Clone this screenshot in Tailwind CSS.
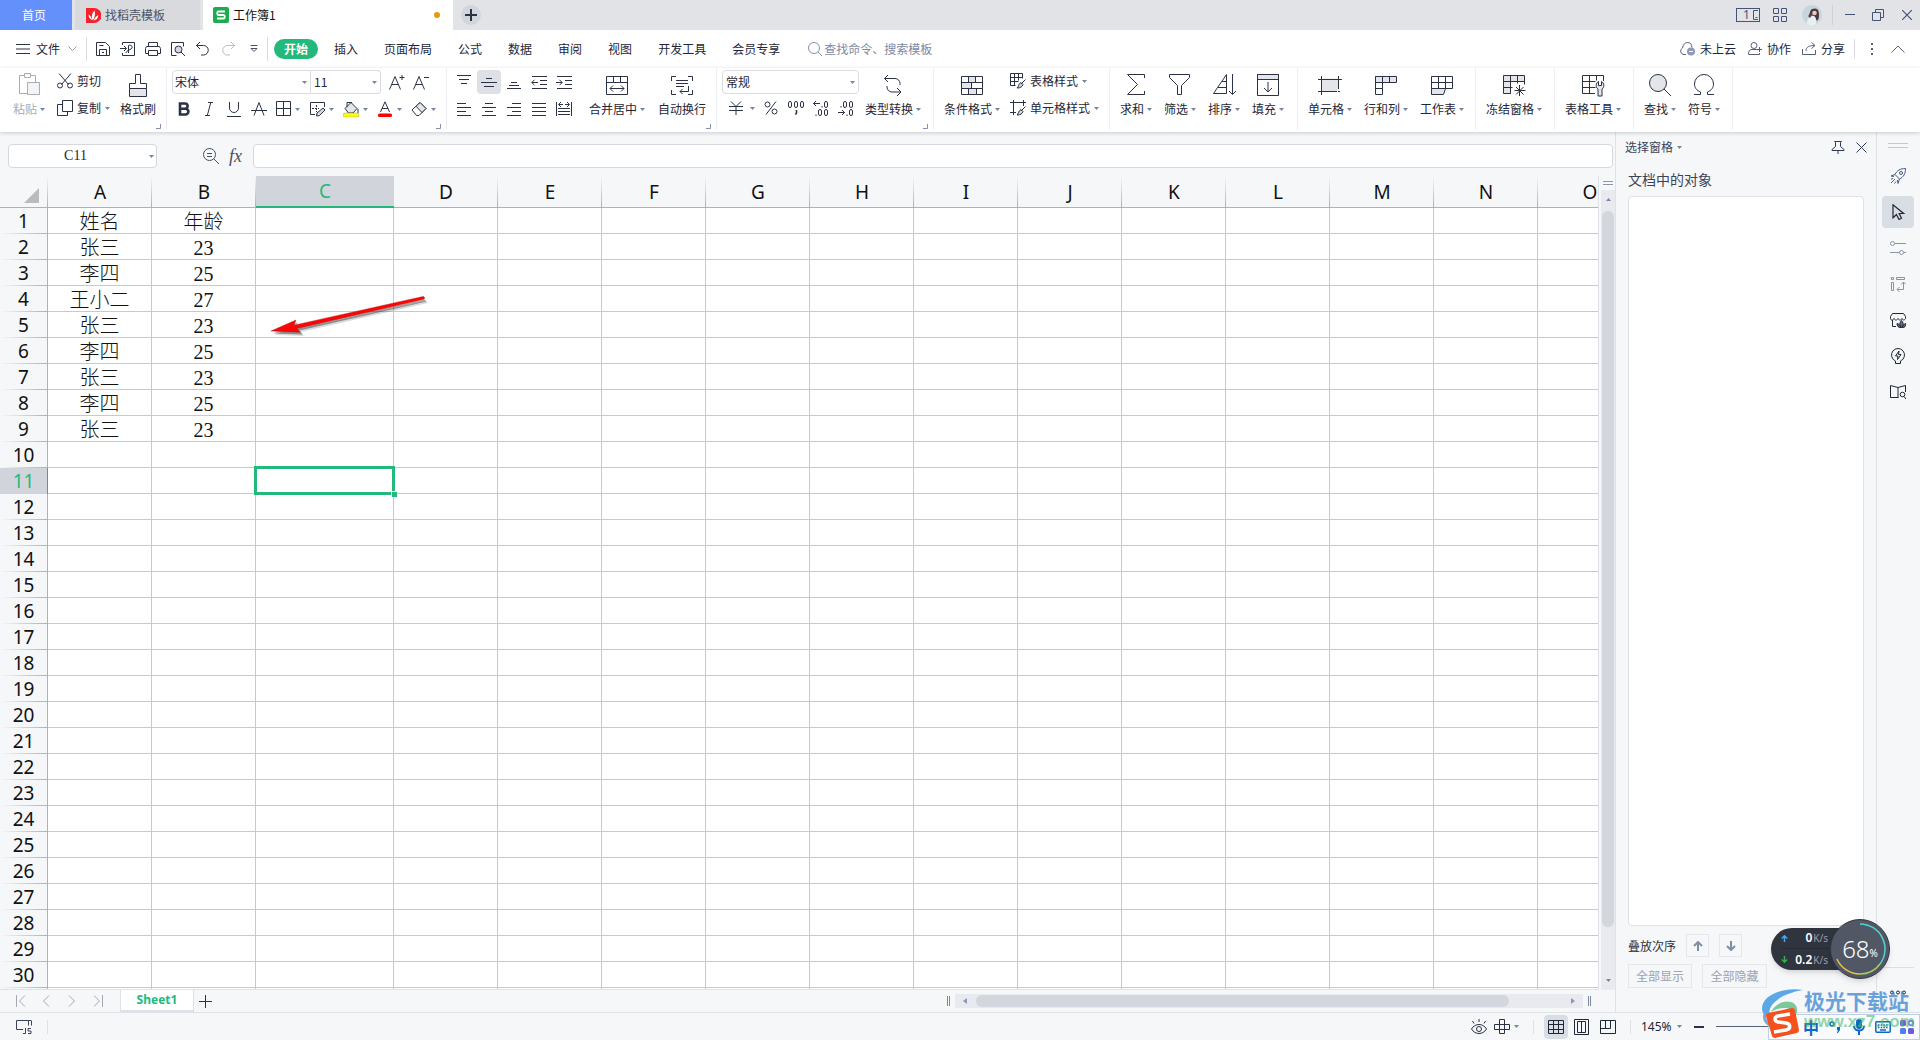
<!DOCTYPE html>
<html lang="zh-CN">
<head>
<meta charset="utf-8">
<title>工作簿1</title>
<script src="https://cdn.jsdelivr.net/npm/@tailwindcss/browser@4"></script>
</head>
<body class="relative flex h-screen flex-col overflow-hidden bg-[#f5f7f9] font-['Noto_Sans_CJK_SC',sans-serif] text-xs leading-4 text-[#1f2636]">

<svg class="hidden" aria-hidden="true">
  <symbol id="caret" viewBox="0 0 5 3"><path d="M0 0h5L2.500 3z" fill="#7585a2"/></symbol>
  <symbol id="corner" viewBox="0 0 5 5"><path d="M4.500 0v4.500H0" fill="none" stroke="#8590ab"/></symbol>
</svg>

<!-- Title bar -->
<header class="flex h-[30px] shrink-0 items-center bg-[#e2e3e7]">
  <nav class="flex h-full items-center gap-[3px]">
    <a href="#" class="flex h-full w-[72px] items-center justify-center bg-[#6490fb] pr-1 text-white">首页</a>
    <a href="#" class="flex h-full w-[125px] items-center gap-1 bg-[#d8dade] pl-[11px] text-[#4c5365]">
      <svg class="size-[15px]" viewBox="0 0 15 15"><path d="M0 0h8a7.500 7.500 0 0 1 0 15H0z" fill="#f5222d"/><path d="M6.800 12.500C5 9 6 5.500 8.500 2.500c1 3 .5 7-1.700 10zM6 12C3.500 11 2.600 9 2.500 6.500 4.500 7.500 5.600 9.500 6 12zM7.800 12.500c.4-2 1.700-4 4.500-5.500 0 3-1.600 5-4.500 5.500z" fill="#fff"/></svg>找稻壳模板</a>
    <a href="#" class="flex h-full w-[250px] items-center gap-1 bg-white pr-[13px] pl-[10px] text-[#111]">
      <svg class="size-4" viewBox="0 0 16 16"><rect width="16" height="16" rx="2" fill="#1aad4f"/><path d="M12 4.500H5.500A1.200 1.200 0 0 0 4.300 5.700v1A1.200 1.200 0 0 0 5.500 8h5a1.200 1.200 0 0 1 1.200 1.200v1a1.200 1.200 0 0 1-1.200 1.300H4" fill="none" stroke="#fff" stroke-width="1.800"/></svg>
      <span class="flex-1">工作簿1</span><i class="size-[6px] rounded-full bg-[#e69b0a]"></i></a>
  </nav>
  <button aria-label="新建" class="ml-2 flex size-5 items-center justify-center rounded-full bg-[#d2d5dc]"><svg class="size-3" viewBox="0 0 12 12"><path d="M6 0v12M0 6h12" stroke="#2b3245" stroke-width="2"/></svg></button>
  <div class="ml-auto flex items-center pr-2">
    <button aria-label="窗口" class="flex h-[14px] w-6 border border-[#445377]"><span class="flex-1 pl-1 text-xs leading-3 font-['Noto_Sans'] text-[#445377]">1</span><svg class="h-3 w-[7px]" viewBox="0 0 7 12"><path d="M6 1.500H1.500v9H6M3.500 8.500h2" fill="none" stroke="#445377"/></svg></button>
    <button aria-label="应用" class="ml-[13px]"><svg class="size-[14px]" viewBox="0 0 14 14" fill="none" stroke="#445377"><path d="M.5.5h5v5h-5zM8.500.5h5v5h-5zM.5 8.500h5v5h-5zM8.500 8.500h5v5h-5z"/></svg></button>
    <button aria-label="账号" class="ml-[15px]"><svg class="size-5" viewBox="0 0 20 20"><circle cx="10" cy="10" r="10" fill="#c9d5dc"/><path d="M10 4c4-1.500 7 0 7 5 0 3 0 5-2 7l-3-5-5-1c1-2 1-5 3-6z" fill="#4b3a3d"/><circle cx="12.500" cy="8" r="2.300" fill="#e8c9bd"/><path d="M5 19c0-5 3-8 6-8 2 0 3 2 3 4v4a10 10 0 0 1-9 0z" fill="#e6f1f4"/><path d="M6 11l3-3 1 2-2 3z" fill="#56464a"/></svg></button>
    <i class="ml-[10px] h-5 w-px bg-[#cfd1d7]"></i>
    <button aria-label="最小化" class="ml-3"><svg class="h-3 w-[10px]" viewBox="0 0 10 12"><path d="M0 5.500h10" stroke="#445377"/></svg></button>
    <button aria-label="还原" class="ml-[17px]"><svg class="size-3" viewBox="0 0 12 12" fill="none" stroke="#445377"><path d="M.5 3.500h8v8h-8zM3.500 3.500v-3h8v8h-3"/></svg></button>
    <button aria-label="关闭" class="ml-[18px]"><svg class="size-[10px]" viewBox="0 0 10 10"><path d="M0 0l10 10M10 0L0 10" stroke="#445377" stroke-width="1.200"/></svg></button>
  </div>
</header>

<!-- Menu bar -->
<div class="flex h-[38px] shrink-0 items-center bg-white">
  <button class="ml-4 flex items-center"><svg class="mr-[6px] h-3 w-[14px]" viewBox="0 0 14 12"><path d="M0 1.500h14M0 6h14M0 10.500h14" stroke="#2b3245"/></svg>文件<svg class="ml-2 h-[6px] w-[9px]" viewBox="0 0 9 6"><path d="M.5.5l4 4 4-4" fill="none" stroke="#9a9ca3"/></svg></button>
  <i class="ml-[9px] h-6 w-px bg-[#dadce1]"></i>
  <div class="ml-2 flex items-center gap-[9px]">
    <button aria-label="保存"><svg class="size-4" viewBox="0 0 16 16" fill="none" stroke="#2b3245"><path d="M1.500 1.500h9l4 4v9h-13zM4.500 14.500v-6h7v6M4.500 4.500h4M7 11.500h2"/></svg></button>
    <button aria-label="输出为PDF"><svg class="size-4" viewBox="0 0 16 16" fill="none" stroke="#2b3245"><path d="M2.500 4V1.500h12v13h-12V12M0 7.500h6M4 5l2.500 2.500L4 10M8.500 12V4.500c4-1.500 5 3 1.500 4-3 1-3.500 2.500-4 3.500"/></svg></button>
    <button aria-label="打印"><svg class="size-4" viewBox="0 0 16 16" fill="none" stroke="#2b3245"><path d="M3.500 5.500v-4h9v4M3.500 12.500h-3v-5l1-2h13l1 2v5h-3M3.500 9.500h9v5h-9z"/></svg></button>
    <button aria-label="打印预览"><svg class="size-4" viewBox="0 0 16 16" fill="none" stroke="#2b3245"><path d="M6.500 14.500h-5v-13h12v4"/><circle cx="8.500" cy="8.500" r="3.500" fill="#d5d8df"/><path d="M11 11l4 4"/></svg></button>
    <button aria-label="撤销"><svg class="size-4" viewBox="0 0 16 16" fill="none" stroke="#2b3245"><path d="M5 1L1.500 4.500 5 8M1.500 4.500h7a4.500 4.500 0 0 1 0 9.500H6"/></svg></button>
    <button aria-label="恢复"><svg class="size-4" viewBox="0 0 16 16" fill="none" stroke="#b9bcc3"><path d="M11 1l3.500 3.500L11 8M14.500 4.500h-7a4.500 4.500 0 0 0 0 9.500H10"/></svg></button>
    <button aria-label="更多" class="ml-[5px]"><svg class="h-2 w-2" viewBox="0 0 8 8" fill="none" stroke="#4b5263"><path d="M.5.500h7M1 3.500l3 3 3-3z"/></svg></button>
  </div>
  <i class="ml-[9px] h-6 w-px bg-[#dadce1]"></i>
  <nav class="ml-[6px] flex items-center gap-[6px]">
    <a href="#" class="rounded-full bg-[#23b97c] px-[10px] py-[2px] font-bold text-white">开始</a>
    <a href="#" class="px-[10px]">插入</a><a href="#" class="px-[10px]">页面布局</a><a href="#" class="px-[10px]">公式</a><a href="#" class="px-[10px]">数据</a><a href="#" class="px-[10px]">审阅</a><a href="#" class="px-[10px]">视图</a><a href="#" class="px-[10px]">开发工具</a><a href="#" class="px-[10px]">会员专享</a>
  </nav>
  <label class="ml-[18px] flex items-center gap-[2px]"><svg class="size-[14px]" viewBox="0 0 14 14" fill="none" stroke="#8590ab"><circle cx="6" cy="6" r="5.500"/><path d="M10 10l4 4"/></svg><input aria-label="搜索" class="w-32 outline-none placeholder:text-[#7d89a4]" placeholder="查找命令、搜索模板"></label>
  <div class="ml-auto flex items-center pr-[15px]">
    <button class="flex items-center gap-[5px]"><svg class="h-[14px] w-[15px]" viewBox="0 0 15 14" fill="none" stroke="#596178"><path d="M6 12.500H4C.5 12.500-.5 8 2.500 6 3 2.500 5 .5 7.500.5S12 2 12 5.500"/><circle cx="11" cy="9.500" r="4" fill="#8f99b3" stroke="none"/><path d="M9 9.500h4" stroke="#fff"/></svg>未上云</button>
    <button class="ml-3 flex items-center gap-[5px]"><svg class="h-[14px] w-[14px]" viewBox="0 0 14 14" fill="none" stroke="#596178"><circle cx="6" cy="3.500" r="3"/><path d="M9 7.500H4C1.500 7.500.5 9 .5 12.500h11V11M11.500 5v5M9 7.500h5"/></svg>协作</button>
    <button class="ml-[11px] flex items-center gap-[5px]"><svg class="h-[14px] w-[14px]" viewBox="0 0 14 14" fill="none" stroke="#596178"><path d="M.5 7v5.500h13V8M4 9c0-4 3-5.500 9-5.500M9.500.5l3.500 3-3.500 3"/></svg>分享</button>
    <i class="ml-[9px] h-5 w-px bg-[#dadce1]"></i>
    <button aria-label="更多选项" class="ml-4"><svg class="h-3 w-[2px]" viewBox="0 0 2 12" fill="#596178"><path d="M0 0h2v2H0zM0 5h2v2H0zM0 10h2v2H0z"/></svg></button>
    <button aria-label="折叠功能区" class="ml-[18px]"><svg class="h-2 w-[14px]" viewBox="0 0 14 8"><path d="M.5 7.500L7 1l6.500 6.500" fill="none" stroke="#596178"/></svg></button>
  </div>
</div>

<!-- Ribbon -->
<div class="z-10 flex h-16 shrink-0 bg-white pb-[2px] shadow-[0_1px_4px_rgba(0,0,0,0.18)]">
  <section class="relative flex w-[167px] shrink-0 border-r border-[#eceef1] pt-[5px] pl-[13px]">
    <button class="flex w-8 flex-col items-center gap-1 text-[#a9acb3]"><svg class="size-6" viewBox="0 0 24 24" fill="none" stroke="#a9acb3"><path d="M8 2.500H2.500v18H10M14 2.500h4.500V9"/><path d="M7.500.5h6v4h-6z"/><path d="M10.500 9.500h12v12h-12z" fill="#f3f4f5"/></svg><span class="flex w-full items-center justify-between whitespace-nowrap">粘贴<svg class="h-[3px] w-[5px]"><use href="#caret"/></svg></span></button>
    <div class="ml-3 flex flex-col gap-[11px]">
      <button class="flex items-center"><svg class="mr-1 size-4" viewBox="0 0 16 16" fill="none" stroke="#2b3245"><path d="M2 .5l9.500 11M14 .5L4.500 11.500"/><circle cx="3" cy="12.500" r="2.500"/><circle cx="13" cy="12.500" r="2.500"/></svg>剪切</button>
      <button class="flex items-center"><svg class="mr-1 size-4" viewBox="0 0 16 16" fill="none" stroke="#2b3245"><path d="M5.500.5h10v11h-10zM5 4.500H.5v11h10V12"/></svg>复制<svg class="ml-1 h-[3px] w-[5px]"><use href="#caret"/></svg></button>
    </div>
    <button class="ml-[10px] flex w-9 flex-col items-center gap-1 self-start"><svg class="size-6" viewBox="0 0 24 24" fill="none" stroke="#2b3245"><path d="M3.500 15.500h17v8h-17z" fill="#e3e5e8"/><path d="M3.500 15.500v-5h6v-9h5v9h6v5"/></svg>格式刷</button>
    <svg class="absolute right-[5px] bottom-[1px] size-[5px]"><use href="#corner"/></svg>
  </section>

  <section class="relative w-[280px] shrink-0 border-r border-[#eceef1] pt-[2px] pl-[5px]">
    <div class="flex h-6 items-center">
      <div class="relative h-6 w-[139px]"><select aria-label="字体" class="h-6 w-full appearance-none rounded-l-sm border border-[#dadce1] pl-[2px]"><option>宋体</option></select><svg class="absolute top-[11px] right-1 h-[3px] w-[5px]"><use href="#caret"/></svg></div>
      <div class="relative h-6 w-[70px]"><select aria-label="字号" class="h-6 w-full appearance-none rounded-r-sm border border-l-0 border-[#dadce1] pl-[3px]"><option>11</option></select><svg class="absolute top-[11px] right-1 h-[3px] w-[5px]"><use href="#caret"/></svg></div>
      <button aria-label="增大字号" class="ml-2"><svg class="size-4" viewBox="0 0 16 16" fill="none" stroke="#2b3245"><path d="M.5 15.500L6 2.500l5.500 13M2.500 10.500h7M13 1v5M10.500 3.500h5"/></svg></button>
      <button aria-label="减小字号" class="ml-2"><svg class="size-4" viewBox="0 0 16 16" fill="none" stroke="#2b3245"><path d="M.5 15.500L6 2.500l5.500 13M2.500 10.500h7M11 3.500h5"/></svg></button>
    </div>
    <div class="mt-[3px] flex h-6 items-center">
      <div class="flex gap-px">
        <button aria-label="加粗" class="flex w-6 justify-center"><svg class="size-4" viewBox="0 0 16 16" fill="none" stroke="#2b3245" stroke-width="2.600"><path d="M4 2.500h5a2.600 2.600 0 0 1 0 5.200H4zM4 7.700h5.500a2.900 2.900 0 0 1 0 5.800H4z"/></svg></button>
        <button aria-label="斜体" class="flex w-6 justify-center"><svg class="size-4" viewBox="0 0 16 16" fill="none" stroke="#2b3245"><path d="M7 1.500h5M4 14.500h5M9.800 1.500l-3.500 13"/></svg></button>
        <button aria-label="下划线" class="flex w-6 justify-center"><svg class="size-4" viewBox="0 0 16 16" fill="none" stroke="#2b3245"><path d="M3.500 1v6a4.500 4.500 0 0 0 9 0V1M1 15.500h14"/></svg></button>
        <button aria-label="删除线" class="flex w-6 justify-center"><svg class="size-4" viewBox="0 0 16 16" fill="none" stroke="#2b3245"><path d="M3 14.500L8 1.500l5 13M0 9.500h16"/></svg></button>
      </div>
      <button aria-label="边框" class="ml-1 flex w-[34px] items-center gap-1"><svg class="size-4" viewBox="0 0 16 16" fill="none" stroke="#2b3245"><path d="M1.500.5h14v14h-14zM8.500.5v14M1.500 7.500h14"/></svg><svg class="h-[3px] w-[5px]"><use href="#caret"/></svg></button>
      <button aria-label="绘制边框" class="flex w-[34px] items-center gap-1"><svg class="size-4" viewBox="0 0 16 16" fill="none" stroke="#2b3245"><path d="M15.500 6V1.500H1.500v12H6"/><path d="M3 7.500h7M7.500 4v7" stroke-dasharray="2 1"/><path d="M14 7l2 2-5.500 5.500-3 .5.500-3z" fill="#d5d8df"/></svg><svg class="h-[3px] w-[5px]"><use href="#caret"/></svg></button>
      <button aria-label="填充颜色" class="flex w-[34px] items-center gap-1"><svg class="size-4" viewBox="0 0 16 16"><path d="M2 7.500l6-6 6 6-4 4.500H5.500z" fill="#e3e5e8" stroke="#2b3245"/><path d="M4 6V1.500h5M15 8v4" fill="none" stroke="#2b3245"/><rect y="12" width="16" height="4" rx="2" fill="#ff0" stroke="#8a8a30" stroke-width=".4"/></svg><svg class="h-[3px] w-[5px]"><use href="#caret"/></svg></button>
      <button aria-label="字体颜色" class="flex w-[34px] items-center gap-1"><svg class="size-4" viewBox="0 0 16 16"><path d="M3.500 11L8 .8 12.500 11M5 7.500h6" fill="none" stroke="#2b3245"/><rect x="1" y="12.500" width="14" height="3.500" rx="1.500" fill="#f00"/></svg><svg class="h-[3px] w-[5px]"><use href="#caret"/></svg></button>
      <button aria-label="清除" class="flex w-[34px] items-center gap-1"><svg class="size-4" viewBox="0 0 16 16" stroke="#2b3245"><path d="M1 9l8-7.500 6 6L8 14.500H5.500z" fill="#fff"/><path d="M9 1.500l6 6-4 4-6-6.200z" fill="#e3e5e8"/></svg><svg class="h-[3px] w-[5px]"><use href="#caret"/></svg></button>
    </div>
    <svg class="absolute right-[5px] bottom-[1px] size-[5px]"><use href="#corner"/></svg>
  </section>

  <section class="relative flex w-[270px] shrink-0 border-r border-[#eceef1] pl-[5px]">
    <div class="grid w-[124px] grid-cols-5 gap-x-px gap-y-[3px] self-start pt-[2px]">
      <button aria-label="顶端对齐" class="flex size-6 items-center justify-center"><svg class="size-4" viewBox="0 0 16 16" stroke="#2b3245"><path d="M1 1.500h14M3 5.500h10M5 9.500h6"/></svg></button>
      <button aria-label="垂直居中" class="flex size-6 items-center justify-center rounded-sm bg-[#dde1e6]"><svg class="size-4" viewBox="0 0 16 16" stroke="#2b3245"><path d="M5 4.500h6M0 8.500h16M3 12.500h10"/></svg></button>
      <button aria-label="底端对齐" class="flex size-6 items-center justify-center"><svg class="size-4" viewBox="0 0 16 16" stroke="#2b3245"><path d="M5 8.500h6M3 11.500h10M1 14.500h14"/></svg></button>
      <button aria-label="减少缩进" class="flex size-6 items-center justify-center"><svg class="size-4" viewBox="0 0 16 16" fill="none" stroke="#2b3245"><path d="M1 2.500h15M9 6.500h7M9 10.500h7M1 14.500h15M7 8.500H.8M3.500 5.800L.8 8.500l2.700 2.700"/></svg></button>
      <button aria-label="增加缩进" class="flex size-6 items-center justify-center"><svg class="size-4" viewBox="0 0 16 16" fill="none" stroke="#2b3245"><path d="M1 2.500h15M9 6.500h7M9 10.500h7M1 14.500h15M0 8.500h6M3.500 5.800l2.700 2.700-2.700 2.700"/></svg></button>
      <button aria-label="左对齐" class="flex size-6 items-center justify-center"><svg class="size-4" viewBox="0 0 16 16" stroke="#2b3245"><path d="M1 2.500h9M1 6.500h14M1 10.500h9M1 14.500h14"/></svg></button>
      <button aria-label="居中" class="flex size-6 items-center justify-center"><svg class="size-4" viewBox="0 0 16 16" stroke="#2b3245"><path d="M4 2.500h8M1 6.500h14M4 10.500h8M1 14.500h14"/></svg></button>
      <button aria-label="右对齐" class="flex size-6 items-center justify-center"><svg class="size-4" viewBox="0 0 16 16" stroke="#2b3245"><path d="M6 2.500h9M1 6.500h14M6 10.500h9M1 14.500h14"/></svg></button>
      <button aria-label="两端对齐" class="flex size-6 items-center justify-center"><svg class="size-4" viewBox="0 0 16 16" stroke="#2b3245"><path d="M1 2.500h14M1 6.500h14M1 10.500h14M1 14.500h14"/></svg></button>
      <button aria-label="分散对齐" class="flex size-6 items-center justify-center"><svg class="size-4" viewBox="0 0 16 16" fill="none" stroke="#2b3245"><path d="M.5 1v14M15.500 1v14M3 3.500h4M9 3.500h4M5 1L2.500 3.500 5 6M11 1l2.500 2.500L11 6M2 7.500h12M2 10.500h12M2 13.500h12"/></svg></button>
    </div>
    <button class="mt-[5px] ml-[13px] flex w-14 flex-col items-center gap-1 self-start"><svg class="size-6" viewBox="0 0 24 24" fill="none" stroke="#2b3245"><path d="M1.500 3.500h21v18h-21zM1.500 9.500h21M8.500 3.500v6M15.500 3.500v6M5 15.500h14M8 12.500l-3 3 3 3M16 12.500l3 3-3 3"/></svg><span class="flex w-full items-center justify-between whitespace-nowrap">合并居中<svg class="h-[3px] w-[5px]"><use href="#caret"/></svg></span></button>
    <button class="mt-[5px] ml-[13px] flex w-12 flex-col items-center gap-1 self-start"><svg class="size-6" viewBox="0 0 24 24" fill="none" stroke="#2b3245"><path d="M1.500 8V3.500H6M18 3.500h4.500V8M1.500 17v4.500H6M18 21.500h4.500V17M6 7.500h12M6 10.500h12M6 13.500h8M18.500 13v5.500H10M12.500 16L10 18.500l2.500 2.500"/></svg>自动换行</button>
    <svg class="absolute right-[5px] bottom-[1px] size-[5px]"><use href="#corner"/></svg>
  </section>

  <section class="relative flex w-[217px] shrink-0 border-r border-[#eceef1] pt-[2px] pl-[5px]">
    <div class="w-[137px]">
      <div class="relative h-6"><select aria-label="数字格式" class="h-6 w-full appearance-none rounded-sm border border-[#dadce1] pl-[3px]"><option>常规</option></select><svg class="absolute top-[11px] right-1 h-[3px] w-[5px]"><use href="#caret"/></svg></div>
      <div class="mt-[2px] flex h-6 items-center">
        <button aria-label="货币" class="ml-[7px] flex items-center gap-[7px]"><svg class="size-[14px]" viewBox="0 0 14 14" fill="none" stroke="#2b3245"><path d="M2 .5l5 5 5-5M0 5.500h14M0 9.500h14M7 5v9"/></svg><svg class="h-[3px] w-[5px]"><use href="#caret"/></svg></button>
        <button aria-label="百分比" class="ml-[9px]"><svg class="size-[14px]" viewBox="0 0 14 14" fill="none" stroke="#2b3245"><circle cx="3.500" cy="3.500" r="2.500"/><circle cx="10.500" cy="10.500" r="2.500"/><path d="M12 .5l-10 13"/></svg></button>
        <button aria-label="千位分隔" class="ml-[9px]"><svg class="h-[18px] w-[18px]" viewBox="0 0 18 18" fill="none" stroke="#2b3245"><rect x="1.500" y="2.500" width="3" height="6" rx="1.500"/><rect x="7.500" y="2.500" width="3" height="6" rx="1.500"/><rect x="13.500" y="2.500" width="3" height="6" rx="1.500"/><path d="M9.500 11v3l-1 1.500" stroke-width="1.500"/></svg></button>
        <button aria-label="增加小数位" class="ml-[7px]"><svg class="h-[18px] w-[18px]" viewBox="0 0 18 18" fill="none" stroke="#2b3245"><path d="M8 4.500H1.500M4 2L1.500 4.500 4 7M10 7v1.500M4 15.500V17"/><rect x="12.500" y="2.500" width="3" height="6" rx="1.500"/><rect x="6.500" y="10.500" width="3" height="6" rx="1.500"/><rect x="12.500" y="10.500" width="3" height="6" rx="1.500"/></svg></button>
        <button aria-label="减少小数位" class="ml-[7px]"><svg class="h-[18px] w-[18px]" viewBox="0 0 18 18" fill="none" stroke="#2b3245"><path d="M1 13.500h6.500M5 11l2.500 2.500L5 16M10 15.500V17M4 7v1.500"/><rect x="12.500" y="2.500" width="3" height="6" rx="1.500"/><rect x="6.500" y="2.500" width="3" height="6" rx="1.500"/><rect x="12.500" y="10.500" width="3" height="6" rx="1.500"/></svg></button>
      </div>
    </div>
    <button class="mt-[3px] ml-[6px] flex w-14 flex-col items-center gap-1 self-start"><svg class="size-6" viewBox="0 0 24 24" fill="none" stroke="#2b3245"><path d="M7 2L3.500 5.500 7 9M3.500 5.500H14a5 5 0 0 1 5 5V12M16 15l4 4-4 4M20 19h-9a5 5 0 0 1-5-5v-1"/></svg><span class="flex w-full items-center justify-between whitespace-nowrap">类型转换<svg class="h-[3px] w-[5px]"><use href="#caret"/></svg></span></button>
    <svg class="absolute right-[5px] bottom-[1px] size-[5px]"><use href="#corner"/></svg>
  </section>

  <section class="flex w-[176px] shrink-0 border-r border-[#eceef1] pt-[5px] pl-[10px]">
    <button class="flex w-14 flex-col items-center gap-1 self-start"><svg class="size-6" viewBox="0 0 24 24" fill="none" stroke="#2b3245"><path d="M8.500 3.500h7v6h-7zM1.500 9.500h10v6h-10zM8.500 15.500h8v6h-8z" fill="#e3e5e8"/><path d="M1.500 3.500h21v18h-21zM1.500 9.500h21M1.500 15.500h21"/></svg><span class="flex w-full items-center justify-between whitespace-nowrap">条件格式<svg class="h-[3px] w-[5px]"><use href="#caret"/></svg></span></button>
    <div class="ml-[10px] flex flex-col items-start gap-[11px]">
      <button class="flex items-center whitespace-nowrap"><svg class="mr-1 size-4" viewBox="0 0 16 16" fill="none" stroke="#2b3245"><path d="M.5 12.500V.5h12v5M.5 4.500h12M.5 8.500h8M4.500.5v12M8.500.5v7M.5 12.500h5"/><path d="M15.500 6.500L11 11M11 9.500l2 2c-1 2.500-2.500 3.500-6 3.500 2-1 1-4 4-5.500z" fill="#d5d8df"/></svg>表格样式<svg class="ml-1 h-[3px] w-[5px]"><use href="#caret"/></svg></button>
      <button class="flex items-center whitespace-nowrap"><svg class="mr-1 size-4" viewBox="0 0 16 16" fill="none" stroke="#2b3245"><path d="M0 2.500h16M3.500 0v15M0 12.500h6M13.500 0v6"/><path d="M15.500 6.500L11 11M11 9.500l2 2c-1 2.500-2.500 3.500-6 3.500 2-1 1-4 4-5.500z" fill="#d5d8df"/></svg>单元格样式<svg class="ml-1 h-[3px] w-[5px]"><use href="#caret"/></svg></button>
    </div>
  </section>

  <section class="flex w-[188px] shrink-0 items-start gap-3 border-r border-[#eceef1] pt-[5px] pl-[10px]">
    <button class="flex w-8 flex-col items-center gap-1"><svg class="size-6" viewBox="0 0 24 24" fill="none" stroke="#2b3245"><path d="M20.500 5V1.500h-17L13.500 11.500 3.500 21.500h17V18"/></svg><span class="flex w-full items-center justify-between whitespace-nowrap">求和<svg class="h-[3px] w-[5px]"><use href="#caret"/></svg></span></button>
    <button class="flex w-8 flex-col items-center gap-1"><svg class="size-6" viewBox="0 0 24 24" fill="none" stroke="#2b3245"><path d="M1.500 1.500h20v3l-8 8v9h-4v-9l-8-8z"/></svg><span class="flex w-full items-center justify-between whitespace-nowrap">筛选<svg class="h-[3px] w-[5px]"><use href="#caret"/></svg></span></button>
    <button class="flex w-8 flex-col items-center gap-1"><svg class="size-6" viewBox="0 0 24 24" fill="none" stroke="#2b3245"><path d="M14.500 1.500v19H1.500zM10 8.500h4.500M6 14.500h8.500M20.500 1v20M17 18l3.500 3.500L24 18"/></svg><span class="flex w-full items-center justify-between whitespace-nowrap">排序<svg class="h-[3px] w-[5px]"><use href="#caret"/></svg></span></button>
    <button class="flex w-8 flex-col items-center gap-1"><svg class="size-6" viewBox="0 0 24 24" fill="none" stroke="#2b3245"><path d="M1.500 1.500h21v5h-21z" fill="#e3e5e8"/><path d="M1.500 1.500h21v21h-21zM12 9v10M8 15l4 4 4-4"/></svg><span class="flex w-full items-center justify-between whitespace-nowrap">填充<svg class="h-[3px] w-[5px]"><use href="#caret"/></svg></span></button>
  </section>

  <section class="flex w-[178px] shrink-0 items-start gap-3 border-r border-[#eceef1] pt-[5px] pl-[10px]">
    <button class="flex w-11 flex-col items-center gap-1"><svg class="size-6" viewBox="0 0 24 24" fill="none" stroke="#2b3245"><path d="M3.500 5.500h17v13h-17z" fill="#e3e5e8" stroke="none"/><path d="M0 6.500h24M3.500 3v19M20.500 3v13M0 18.500h19M20 18.500h2"/></svg><span class="flex w-full items-center justify-between whitespace-nowrap">单元格<svg class="h-[3px] w-[5px]"><use href="#caret"/></svg></span></button>
    <button class="flex w-11 flex-col items-center gap-1"><svg class="size-6" viewBox="0 0 24 24" fill="none" stroke="#2b3245"><path d="M1.500 3.500h21v6h-21z" fill="#e3e5e8"/><path d="M8.500 3.500v18h-7v-18M15.500 3.500v6M1.500 15.500h7"/></svg><span class="flex w-full items-center justify-between whitespace-nowrap">行和列<svg class="h-[3px] w-[5px]"><use href="#caret"/></svg></span></button>
    <button class="flex w-11 flex-col items-center gap-1"><svg class="size-6" viewBox="0 0 24 24" fill="none" stroke="#2b3245"><path d="M1.500 15.500h14l-2 6h-12z" fill="#e3e5e8"/><path d="M1.500 3.500h21v12h-21zM1.500 9.500h21M8.500 3.500v12M15.500 3.500v12"/></svg><span class="flex w-full items-center justify-between whitespace-nowrap">工作表<svg class="h-[3px] w-[5px]"><use href="#caret"/></svg></span></button>
  </section>

  <section class="flex w-[79px] shrink-0 items-start border-r border-[#eceef1] pt-[5px] pl-[10px]">
    <button class="flex w-14 flex-col items-center gap-1"><svg class="size-6" viewBox="0 0 24 24" fill="none" stroke="#2b3245"><path d="M1.500 2.500h21v6h-14v12h-7z" fill="#e3e5e8"/><path d="M1.500 8.500h21v3M8.500 2.500v18M15.500 2.500v8M1.500 14.500h9M17.500 12v11M12.500 17.500h11M14 14l7.500 7.500M21.500 14L14 21.500"/></svg><span class="flex w-full items-center justify-between whitespace-nowrap">冻结窗格<svg class="h-[3px] w-[5px]"><use href="#caret"/></svg></span></button>
  </section>
  <section class="flex w-[79px] shrink-0 items-start border-r border-[#eceef1] pt-[5px] pl-[10px]">
    <button class="flex w-14 flex-col items-center gap-1"><svg class="size-6" viewBox="0 0 24 24" fill="none" stroke="#2b3245"><path d="M22.500 8V2.500h-21v18H14M1.500 8.500h13M1.500 14.500h13M8.500 2.500v18M15.500 2.500v5"/><path d="M17.500 8.500v4h3v-4c3 1.500 3 6 .5 7.500v7h-4v-7c-2.500-1.500-2.500-6 .5-7.500z" fill="#e3e5e8"/></svg><span class="flex w-full items-center justify-between whitespace-nowrap">表格工具<svg class="h-[3px] w-[5px]"><use href="#caret"/></svg></span></button>
  </section>
  <section class="flex w-[99px] shrink-0 items-start gap-3 border-r border-[#eceef1] pt-[5px] pl-[10px]">
    <button class="flex w-8 flex-col items-center gap-1"><svg class="size-6" viewBox="0 0 24 24" fill="none" stroke="#2b3245"><circle cx="10" cy="10" r="8.500" fill="#e3e5e8"/><path d="M16 16l7 7"/></svg><span class="flex w-full items-center justify-between whitespace-nowrap">查找<svg class="h-[3px] w-[5px]"><use href="#caret"/></svg></span></button>
    <button class="flex w-8 flex-col items-center gap-1"><svg class="size-6" viewBox="0 0 24 24" fill="none" stroke="#2b3245"><path d="M2 21.500h6.500V19C4.500 17.500 2.500 14.500 2.500 11a9.500 9.500 0 0 1 19 0c0 3.500-2 6.500-6 8v2.500H22"/></svg><span class="flex w-full items-center justify-between whitespace-nowrap">符号<svg class="h-[3px] w-[5px]"><use href="#caret"/></svg></span></button>
  </section>
</div>

<!-- Workspace -->
<div class="flex min-h-0 flex-1">
  <main class="flex min-w-0 flex-1 flex-col">
    <div class="flex h-11 shrink-0 items-center pt-1 pr-[2px] pl-2">
      <div class="relative"><input aria-label="名称框" value="C11" class="h-6 w-[149px] rounded-sm border border-[#d5d8de] bg-white pr-[14px] text-center font-['Liberation_Serif',serif] text-[14px] outline-none"><svg class="absolute top-[11px] right-[3px] h-[3px] w-[5px]"><use href="#caret"/></svg></div>
      <button aria-label="浏览公式结果" class="ml-[46px]"><svg class="size-4" viewBox="0 0 16 16" fill="none" stroke="#445066"><circle cx="6.500" cy="6.500" r="6"/><path d="M4 5.500h5M4 8.500h5M11 11l5 5" /></svg></button>
      <button aria-label="插入函数" class="ml-[10px] w-4 text-left font-['Liberation_Serif',serif] text-lg leading-5 text-[#445066] italic">fx</button>
      <input aria-label="编辑栏" class="ml-2 h-6 min-w-0 flex-1 rounded-sm border border-[#d5d8de] bg-white outline-none">
    </div>

    <div class="flex min-h-0 flex-1">
      <div class="relative min-w-0 flex-1 overflow-hidden border-r border-b border-[#dfe1e8]">
        <table class="w-[1642px] table-fixed border-separate border-spacing-0 font-['Noto_Sans',sans-serif] text-[19px] leading-[22px] text-[#111]">
          <thead><tr id="cols" class="h-8"></tr></thead>
          <tbody id="rows"></tbody>
        </table>
        <svg class="absolute top-[112px] left-[262px] h-[60px] w-[180px]" viewBox="0 0 180 60"><g transform="translate(3 4)" fill="#000" opacity=".15"><path d="M10 43l24-11-2 5 129-28 2 2-127 29 3 4z"/></g><g transform="translate(1.500 2.500)" fill="#000" opacity=".35"><path d="M10 43l24-11-2 5 129-28 2 2-127 29 3 4z"/></g><path d="M9 43l25-11-2 5.200L161 8.500a1.500 1.500 0 0 1 .8 2.800L35 40.500l3 3.700z" fill="#fa0606" stroke="#b31111" stroke-width=".4"/></svg>
      </div>
      <div class="ml-[2px] flex w-[14px] flex-col items-center">
        <div class="my-[5px] h-1 w-[10px] border-y border-[#8a96af]"></div>
        <div class="flex w-full flex-1 flex-col items-center bg-[#e9eaf0] pt-2 pb-2">
          <svg class="h-[3px] w-[5px] rotate-180"><use href="#caret"/></svg>
          <div class="mt-[10px] mb-[52px] w-3 flex-1 rounded-full bg-[#d3d6dd]"></div>
          <svg class="h-[3px] w-[5px]"><use href="#caret"/></svg>
        </div>
      </div>
    </div>

    <div class="flex h-[23px] shrink-0 items-center border-b border-[#dfe1e8]">
      <div class="flex items-center gap-4 pl-4">
        <button aria-label="首个工作表"><svg class="h-3 w-[10px]" viewBox="0 0 10 12" fill="none" stroke="#a3a7b0"><path d="M.5 0v12M9 .5L3.500 6 9 11.500"/></svg></button>
        <button aria-label="上一个"><svg class="h-3 w-[10px]" viewBox="0 0 10 12" fill="none" stroke="#a3a7b0"><path d="M7 .5L1.500 6 7 11.500"/></svg></button>
        <button aria-label="下一个"><svg class="h-3 w-[10px]" viewBox="0 0 10 12" fill="none" stroke="#a3a7b0"><path d="M1 .5L6.500 6 1 11.500"/></svg></button>
        <button aria-label="末个工作表"><svg class="h-3 w-[10px]" viewBox="0 0 10 12" fill="none" stroke="#a3a7b0"><path d="M8.500 0v12M0 .5L5.500 6 0 11.500"/></svg></button>
      </div>
      <a href="#" class="ml-4 flex h-full w-[74px] items-center justify-center border-x border-b-2 border-[#dfe1e8] bg-white font-['Noto_Sans',sans-serif] font-bold text-[#23b97c]">Sheet1</a>
      <button aria-label="新建工作表" class="ml-[5px]"><svg class="size-[13px]" viewBox="0 0 13 13"><path d="M6.500 0v13M0 6.500h13" stroke="#2b3245"/></svg></button>
      <div class="ml-auto flex items-center gap-[5px] pr-6">
        <i class="h-[10px] w-[3px] border-x border-[#7d89a4]"></i>
        <div class="flex h-[14px] w-[628px] items-center justify-between bg-[#e9eaf0] px-2">
          <svg class="h-[6px] w-1" viewBox="0 0 4 6"><path d="M4 0v6L0 3z" fill="#8a98b8"/></svg>
          <div class="mr-[62px] ml-[9px] h-3 flex-1 rounded-full bg-[#d3d6dd]"></div>
          <svg class="h-[6px] w-1" viewBox="0 0 4 6"><path d="M0 0v6l4-3z" fill="#8a98b8"/></svg>
        </div>
        <i class="h-[10px] w-[3px] border-x border-[#7d89a4]"></i>
      </div>
    </div>
  </main>

  <!-- Selection pane -->
  <aside class="flex w-[261px] shrink-0 flex-col border-l border-b border-[#dfe1e8] pr-3 pl-3 text-[#3c4358]">
    <div class="mt-[7px] flex h-4 items-center">
      <button class="-ml-[3px] flex items-center gap-1">选择窗格<svg class="h-[3px] w-[5px]"><use href="#caret"/></svg></button>
      <button aria-label="固定" class="ml-auto"><svg class="size-[14px]" viewBox="0 0 14 14" fill="none" stroke="#2f3a55"><path d="M3.500 1.500h7l-1 1v4l3.500 3v1H1v-1l3.500-3v-4zM7 10.500V14"/></svg></button>
      <button aria-label="关闭窗格" class="mr-[-3px] ml-[11px]"><svg class="size-[11px]" viewBox="0 0 11 11"><path d="M.5.5l10 10M10.500.5l-10 10" stroke="#2f3a55"/></svg></button>
    </div>
    <h2 class="mt-[14px] text-sm leading-5">文档中的对象</h2>
    <div class="mt-[7px] flex-1 rounded-sm border border-[#dfe1e5] bg-white"></div>
    <div class="mt-2 flex items-center text-[#2b3245]"><span class="mr-[10px]">叠放次序</span>
      <button aria-label="上移" class="flex size-[23px] items-center justify-center border border-[#e5e7eb]"><svg class="size-[10px]" viewBox="0 0 10 10"><path d="M5 10V2M1 5l4-4 4 4" fill="none" stroke="#7f8da9" stroke-width="2"/></svg></button>
      <button aria-label="下移" class="ml-[10px] flex size-[23px] items-center justify-center border border-[#e5e7eb]"><svg class="size-[10px]" viewBox="0 0 10 10"><path d="M5 0v8M1 5l4 4 4-4" fill="none" stroke="#7f8da9" stroke-width="2"/></svg></button>
    </div>
    <div class="mt-[7px] mb-6 flex gap-[10px] text-[#9aa3b5]"><button class="h-6 w-16 border border-[#e5e7eb]">全部显示</button><button class="h-6 w-[65px] border border-[#e5e7eb]">全部隐藏</button></div>
  </aside>

  <!-- Side toolbar -->
  <nav class="flex w-11 shrink-0 flex-col items-center border-l border-b border-[#dfe1e8] pr-[2px]">
    <div class="mt-[11px] h-[5px] w-5 border-y border-[#c5c8cf]"></div>
    <div class="mt-3 flex flex-col gap-1">
      <button aria-label="快捷" class="flex size-8 items-center justify-center"><svg class="size-4" viewBox="0 0 16 16" fill="none" stroke="#4d5a7c"><path d="M15.500.5C10 .5 7 2.500 5 6.500l4.500 4.500c4-2 6-5 6-10.500zM5 6.500L1 8l3 .500M9.500 11L8 15.500 7.500 12M1 11.500l2-1.500M1 15l4-4M4.500 15.500l1.500-2"/><circle cx="11" cy="5" r="1.500"/></svg></button>
      <button aria-label="选择" class="flex size-8 items-center justify-center rounded-sm bg-[#d9dee5]"><svg class="size-4" viewBox="0 0 16 16" fill="none" stroke="#1f2636" stroke-width="1.200"><path d="M3 .8v13l3.500-3.300L9 15.500l2.500-1.300-2.300-4.700h4.500z"/></svg></button>
      <button aria-label="属性" class="flex size-8 items-center justify-center"><svg class="size-4" viewBox="0 0 16 16" fill="none" stroke="#8b93a5"><circle cx="2.500" cy="3.500" r="2"/><path d="M5 3.500h11M0 12.500h9.500M14 12.500h2"/><circle cx="11.500" cy="12.500" r="2"/></svg></button>
      <button aria-label="转换" class="flex size-8 items-center justify-center"><svg class="size-4" viewBox="0 0 16 16" fill="none" stroke="#8b93a5"><path d="M1.500 1.500h2v2h-2zM6.500 1.500h8v2h-8zM1.500 6.500h2v8h-2zM13.500 6v7.500H7.500M11 8.500L13.500 6 16 8.500M9.500 11L7 13.500 9.500 16"/></svg></button>
      <button aria-label="素材" class="flex size-8 items-center justify-center"><svg class="size-4" viewBox="0 0 16 16" fill="none" stroke="#1f2636"><path d="M2.500 8v6.500H6M.5 4.500l2-3h11l2 3v2c-1 2-3 2-3.500 0-1 2-3 2-4 0-1 2-3 2-4 0-1 2-3.500 2-3.500 0z"/><path d="M11.500 15.500c-2.500-2-2-5 0-7 2 2 2.500 5 0 7zM11 15.500c-3 .5-4-2-4-4 2 .5 3.500 2 4 4zM12 15.500c3 .5 4-2 4-4-2 .5-3.500 2-4 4z" fill="#6a7080"/></svg></button>
      <button aria-label="智能" class="flex size-8 items-center justify-center"><svg class="size-4" viewBox="0 0 16 16" fill="none" stroke="#1f2636"><path d="M5.500 13a6.500 6.500 0 1 1 5 0v2.500h-5zM9 3L5.500 8H8l-.5 3.500L11 6.500H8.500z"/></svg></button>
      <button aria-label="帮助" class="flex size-8 items-center justify-center"><svg class="size-4" viewBox="0 0 16 16" fill="none" stroke="#1f2636"><path d="M8 3.500L.5 1.500v12h8M8 3.500v10M8 3.500l7.500-2V8"/><circle cx="12.500" cy="10.500" r="2.300"/><path d="M14 12.500l2 2.500"/></svg></button>
    </div>
    <i class="mt-auto h-px w-8 bg-[#dcdfe4]"></i>
    <button aria-label="更多工具" class="mt-[22px] mb-[17px]"><svg class="h-[5px] w-4" viewBox="0 0 16 5" fill="none" stroke="#1f2636"><circle cx="2" cy="2.500" r="1.500"/><circle cx="8" cy="2.500" r="1.500"/><circle cx="14" cy="2.500" r="1.500"/></svg></button>
  </nav>
</div>

<!-- Status bar -->
<footer class="flex h-[27px] shrink-0 items-center">
  <button aria-label="宏" class="ml-4"><svg class="size-4" viewBox="0 0 16 16" fill="none" stroke="#3c4358"><path d="M7 10.500H.5v-9H15M9.500 9v5.500H7M15 9.500h-3v2.500h3v2.500h-3M12.500 6.500v-5M15.500 6.500v-5"/></svg></button>
  <i class="ml-[15px] h-[14px] w-px bg-[#dfe1e8]"></i>
  <div class="ml-auto flex w-[449px] items-center">
    <button aria-label="护眼模式"><svg class="size-4" viewBox="0 0 16 16" fill="none" stroke="#2b3245"><path d="M.5 10C4 4 12 4 15.500 10 12 16 4 16 .5 10zM8 0v3M1.500 2l1.500 2.500M14.500 2L13 4.500"/><circle cx="8" cy="10" r="2.500"/></svg></button>
    <button aria-label="阅读模式" class="ml-[7px] flex items-center gap-1"><svg class="size-4" viewBox="0 0 16 16" fill="none" stroke="#2b3245"><path d="M5.500.5h5v14h-5zM.5 5.500h15v5H.5z"/></svg><svg class="h-[3px] w-[5px]"><use href="#caret"/></svg></button>
    <i class="ml-[14px] h-[14px] w-px bg-[#dfe1e8]"></i>
    <button aria-label="普通视图" class="ml-[10px] flex size-6 items-center justify-center rounded-sm bg-[#d9dee5]"><svg class="size-4" viewBox="0 0 16 16" fill="none" stroke="#1f2636"><path d="M.5 1.500h15v13H.5zM.5 5.500h15M.5 10.500h15M5.500 1.500v13M10.500 1.500v13"/></svg></button>
    <button aria-label="页面布局" class="ml-[6px]"><svg class="size-4" viewBox="0 0 16 16" fill="none" stroke="#1f2636"><path d="M.5.5h14v15H.5zM3.500 2.500h8v11h-8zM7.500 2.500v11"/></svg></button>
    <button aria-label="分页预览" class="ml-[10px]"><svg class="size-4" viewBox="0 0 16 16" fill="none" stroke="#1f2636"><path d="M.5 1.500h15v13H.5zM.5 9.500h10v-8M5.500 1.500v8"/></svg></button>
    <i class="ml-[14px] h-[14px] w-px bg-[#dfe1e8]"></i>
    <button class="ml-[10px] flex items-center gap-[5px] font-['Noto_Sans',sans-serif]">145%<svg class="h-[3px] w-[5px]"><use href="#caret"/></svg></button>
    <button aria-label="缩小" class="ml-3 h-[2px] w-[10px] bg-[#2b3245]"></button>
    <i class="ml-3 h-px flex-1 bg-[#596178]"></i>
  </div>
</footer>

<!-- Input method bar and site mark -->
<div class="absolute right-0 bottom-0 z-20 flex h-[26px] w-[152px] items-center border border-[#bcd0ea] bg-[#f9fbff]">
  <span class="ml-[34px] text-[16px] leading-5 font-bold text-[#0c67c6]">中</span>
  <svg class="ml-[10px] h-3 w-3" viewBox="0 0 12 12" fill="#0c67c6"><circle cx="3" cy="3" r="2" fill="none" stroke="#0c67c6" stroke-width="1.500"/><path d="M8 6h3v3l-2 3H8l1-3H8z"/></svg>
  <svg class="ml-3 h-4 w-3" viewBox="0 0 12 16" fill="none" stroke="#0c67c6" stroke-width="2"><rect x="4" y="1" width="4" height="8" rx="2" fill="#0c67c6"/><path d="M1 7c0 6 10 6 10 0M6 11v5"/></svg>
  <svg class="ml-[10px] h-3 w-4" viewBox="0 0 16 12" fill="none" stroke="#0c67c6" stroke-width="1.500"><rect x=".8" y=".8" width="14.400" height="10.400" rx="1"/><path d="M3 4h10M3 6.500h10" stroke-dasharray="1.500 1.200"/><path d="M5 9h6"/></svg>
  <svg class="ml-[9px] h-[14px] w-[14px]" viewBox="0 0 14 14"><rect width="6" height="6" rx="1.500" fill="#7a5be0"/><circle cx="11" cy="3" r="2.300" fill="none" stroke="#6a6df0" stroke-width="1.500"/><rect y="8" width="6" height="6" rx="1.500" fill="#4c7ef0"/><rect x="8" y="8" width="6" height="6" rx="1.500" fill="#6a5be0"/></svg>
</div>
<div class="absolute right-[10px] bottom-0 z-30 flex h-[52px] items-start">
  <svg class="h-[52px] w-[43px]" viewBox="0 0 43 52">
    <path d="M42 2C24-1 2 6 1 20c0 7 5 9 8 9C5 18 18 6 42 2z" fill="#5aa9e6"/>
    <path d="M10 24c4-8 13-12 20-10 9 3 8 14-2 20-7 5-16 6-22 4 12 0 24-6 25-13 1-6-12-7-21-1z" fill="#7cc89a"/>
    <path d="M4 26c-2 7 3 12 12 12" fill="none" stroke="#7aa7d8" stroke-width="3"/>
    <path d="M7 25l24-5a3 3 0 0 1 3 2l4 20a3 3 0 0 1-2 3l-22 5a3 3 0 0 1-3-2L5 28a3 3 0 0 1 2-3z" fill="#f4511e"/>
    <path d="M29 26l-12 2c-4 1-4 5 0 6l8 1c5 1 5 6 0 7l-12 2" fill="none" stroke="#fff" stroke-width="3.500"/>
  </svg>
  <div class="w-[106px] whitespace-nowrap opacity-75">
    <p class="text-[21px] leading-6 font-bold text-[#3b86d0]">极光下载站</p>
    <p class="font-['Liberation_Sans',sans-serif] text-[17px] leading-5 font-bold text-[#4dbb70] opacity-80">www.xz7.com</p>
  </div>
</div>

<!-- Network monitor -->
<div class="absolute right-[30px] bottom-[61px] z-30 flex h-[60px] items-center">
  <div class="-mr-5 h-[42px] w-[79px] rounded-l-full bg-[#30343f] pr-[22px] pl-[10px] font-['Noto_Sans',sans-serif] text-[10px] text-[#9a9fab] shadow-md">
    <div class="flex h-[21px] items-center border-b border-[#262a33] whitespace-nowrap"><svg class="mr-auto size-[7px]" viewBox="0 0 7 7"><path d="M3.500 7V1M.8 3.500L3.500.8l2.700 2.700" fill="none" stroke="#3da9f5" stroke-width="1.500"/></svg><b class="mr-px text-xs font-semibold text-white">0</b>K/s</div>
    <div class="flex h-[21px] items-center whitespace-nowrap"><svg class="mr-auto size-[7px]" viewBox="0 0 7 7"><path d="M3.500 0v6M.8 3.500l2.700 2.700 2.700-2.700" fill="none" stroke="#2fb344" stroke-width="1.500"/></svg><b class="mr-px text-xs font-semibold text-white">0.2</b>K/s</div>
  </div>
  <div class="relative flex size-[60px] items-center justify-center rounded-full border border-[#343844] bg-[#525765] font-['Noto_Sans',sans-serif] text-white shadow-md">
    <svg class="absolute inset-0 size-full" viewBox="0 0 58 58" fill="none" stroke-width="1.500"><path d="M29 4a25 25 0 0 1 20 40" stroke="#4fd6cf"/><path d="M49 44a25 25 0 0 1-20 10" stroke="#a5cf5e"/><path d="M29 54A25 25 0 0 1 6 39" stroke="#e8c341"/></svg>
    <span class="relative text-2xl leading-6 font-light">68</span><span class="relative mt-2 text-[10px]">%</span>
  </div>
</div>

<script>
  const data = [['姓名','年龄'],['张三','23'],['李四','25'],['王小二','27'],['张三','23'],['李四','25'],['张三','23'],['李四','25'],['张三','23']];
  const letters = [...'ABCDEFGHIJKLMNO'];
  const vline = "bg-[linear-gradient(to_top,#a9b1c8,#f5f7f9)] bg-[length:1px_100%] bg-right bg-no-repeat";
  const hline = "bg-[linear-gradient(to_left,#a9b1c8,#f5f7f9)] bg-[length:100%_1px] bg-bottom bg-no-repeat";

  document.getElementById('cols').innerHTML =
    '<th class="w-12 border-b border-[#a9b1c8] ' + vline + '"><svg class="mt-2 ml-6 size-[15px]" viewBox="0 0 15 15"><path d="M15 0v15H0z" fill="#b9bbbf"/></svg></th>' +
    letters.map(l => l === 'C'
      ? '<th scope="col" class="w-[138px] border-b-2 border-[#23b97c] bg-[#d1d4db] p-0 font-normal text-[#23b97c]">C</th>'
      : '<th scope="col" class="w-[104px] border-b border-[#a9b1c8] p-0 font-normal ' + vline + '">' + l + '</th>').join('');

  let html = '';
  for (let r = 1; r <= 31; r++) {
    // The last row is only a sliver under row 30, so it carries no number.
    html += '<tr class="h-[26px]">' + (r === 11
      ? '<th scope="row" class="border-r border-[#23b97c] bg-[#d1d4db] p-0 font-normal text-[#23b97c]">11</th>'
      : '<th scope="row" class="border-r border-[#a9b1c8] p-0 font-normal ' + hline + '">' + (r < 31 ? r : '') + '</th>');
    letters.forEach((l, c) => {
      const text = (data[r - 1] || [])[c] || '';
      const sel = r === 11 && l === 'C';
      html += "<td class=\"relative border-r border-b border-[#c3c9da] bg-white p-0 pt-[3px] text-center font-['Liberation_Serif','Noto_Sans_CJK_SC',serif] text-xl leading-[22px] font-light\">" + text +
        (sel ? '<div class="absolute -inset-[2px] z-10 border-3 border-[#23b97c]"><i class="absolute -right-[5px] -bottom-[5px] size-[6px] border-t border-l border-white bg-[#23b97c]"></i></div>' : '') + '</td>';
    });
    html += '</tr>';
  }
  document.getElementById('rows').innerHTML = html;
</script>
</body>
</html>
